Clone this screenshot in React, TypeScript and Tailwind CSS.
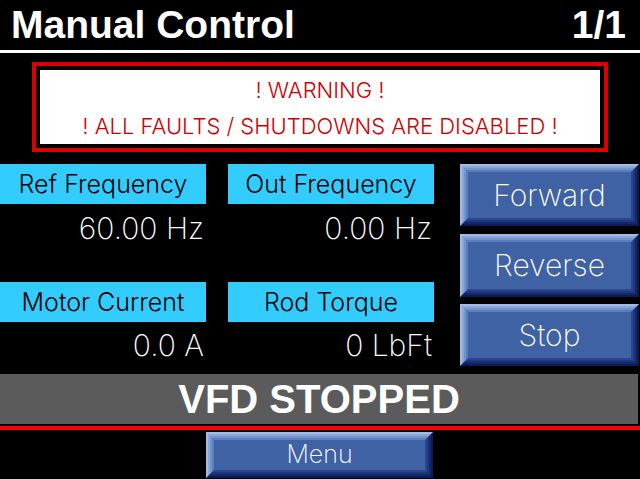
import type { ReactNode } from 'react'

const font = { fontFamily: '"Liberation Sans", Arial, sans-serif' }
const thin = { fontFamily: 'Inter, "Liberation Sans", Arial, sans-serif' }

function BevelButton({ children, className }: { children: ReactNode; className?: string }) {
  return (
    <div
      className={
        'border-2 border-t-[#a3bbe3] border-l-[#a3bbe3] border-b-[#0c1c52] border-r-[#0c1c52] ' +
        (className ?? '')
      }
    >
      <div className="h-full border-2 border-t-[#8aa6d8] border-l-[#8aa6d8] border-b-[#14276a] border-r-[#14276a]">
        <div className="h-full border-2 border-t-[#7393cb] border-l-[#7393cb] border-b-[#1f377e] border-r-[#1f377e]">
          <div
            className="flex h-full items-center justify-center border-2 border-t-[#5c7dbb] border-l-[#5c7dbb] border-b-[#2a4690] border-r-[#2a4690] bg-[#3e62a3] font-[250] text-white"
            style={thin}
          >
            {children}
          </div>
        </div>
      </div>
    </div>
  )
}

function Reading({ label, value, valueTop }: { label: string; value: string; valueTop: string }) {
  return (
    <div className="flex flex-col font-[250]" style={thin}>
      <div className="h-[40px] bg-[#33ccff] text-center text-[25px] font-light leading-[40px] text-black">{label}</div>
      <div className={'h-[78px] pr-[2px] text-right text-[30px] leading-[36px] text-white ' + valueTop}>{value}</div>
    </div>
  )
}

export default function App() {
  return (
    <div className="flex h-[479px] w-[640px] flex-col overflow-hidden bg-black" style={font}>
      <div className="flex h-[50px] items-center justify-between pl-[11px] pr-[14px] text-[39px] font-bold leading-[50px] text-white">
        <span>Manual Control</span>
        <span>1/1</span>
      </div>
      <div className="h-[3px] bg-white" />

      <div className="ml-[32px] mt-[9px] h-[90px] w-[576px] border-4 border-[#d80000] p-[4px]">
        <div
          className="h-full bg-white pt-[2px] text-center text-[22px] font-light leading-[36px] text-[#d00000]"
          style={thin}
        >
          <div>! WARNING !</div>
          <div>! ALL FAULTS / SHUTDOWNS ARE DISABLED !</div>
        </div>
      </div>

      <div className="mt-[12px] flex h-[202px]">
        <div className="flex w-[434px] gap-[22px]">
          <div className="flex w-[206px] flex-col">
            <Reading label="Ref Frequency" value="60.00 Hz" valueTop="pt-[6px]" />
            <Reading label="Motor Current" value="0.0 A" valueTop="pt-[5px]" />
          </div>
          <div className="flex w-[206px] flex-col">
            <Reading label="Out Frequency" value="0.00 Hz" valueTop="pt-[6px]" />
            <Reading label="Rod Torque" value="0 LbFt" valueTop="pt-[5px]" />
          </div>
        </div>
        <div className="ml-[26px] flex w-[179px] flex-col">
          <BevelButton className="h-[62px] text-[30px]">Forward</BevelButton>
          <BevelButton className="mt-[8px] h-[63px] text-[30px]">Reverse</BevelButton>
          <BevelButton className="mt-[7px] h-[62px] text-[30px]">Stop</BevelButton>
        </div>
      </div>

      <div className="mt-[8px] h-[50px] w-[638px] bg-[#5b5b5b] text-center text-[40px] font-bold leading-[50px] text-white">
        VFD STOPPED
      </div>
      <div className="mt-[2px] h-[4px] bg-[#ff0000]" />
      <div className="mt-[2px] flex">
        <BevelButton className="ml-[206px] h-[46px] w-[227px] text-[25px]">Menu</BevelButton>
      </div>
    </div>
  )
}
